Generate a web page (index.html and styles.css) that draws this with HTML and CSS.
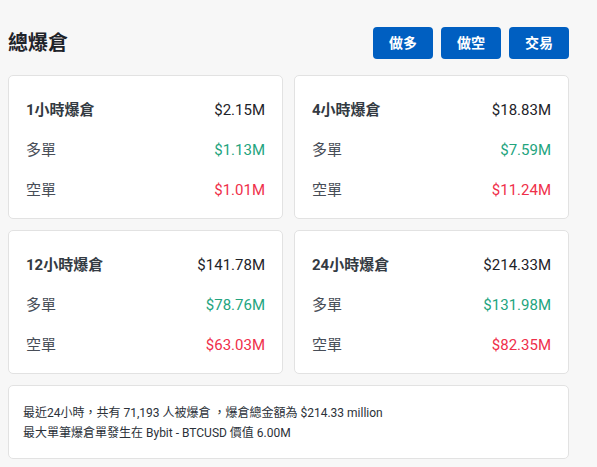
FILE: index.html
```html
<!DOCTYPE html>
<html lang="zh-Hant">
<head>
<meta charset="utf-8">
<link rel="stylesheet" href="styles.css">
</head>
<body>
<div class="page">
  <div class="header">
    <h1 class="title">總爆倉</h1>
    <div class="actions">
      <button class="btn">做多</button>
      <button class="btn">做空</button>
      <button class="btn">交易</button>
    </div>
  </div>
  <div class="grid">
    <div class="card">
      <div class="row head"><span>1小時爆倉</span><span class="val">$2.15M</span></div>
      <div class="row"><span>多單</span><span class="val up">$1.13M</span></div>
      <div class="row"><span>空單</span><span class="val down">$1.01M</span></div>
    </div>
    <div class="card">
      <div class="row head"><span>4小時爆倉</span><span class="val">$18.83M</span></div>
      <div class="row"><span>多單</span><span class="val up">$7.59M</span></div>
      <div class="row"><span>空單</span><span class="val down">$11.24M</span></div>
    </div>
    <div class="card">
      <div class="row head"><span>12小時爆倉</span><span class="val">$141.78M</span></div>
      <div class="row"><span>多單</span><span class="val up">$78.76M</span></div>
      <div class="row"><span>空單</span><span class="val down">$63.03M</span></div>
    </div>
    <div class="card">
      <div class="row head"><span>24小時爆倉</span><span class="val">$214.33M</span></div>
      <div class="row"><span>多單</span><span class="val up">$131.98M</span></div>
      <div class="row"><span>空單</span><span class="val down">$82.35M</span></div>
    </div>
  </div>
  <div class="summary">
    <p>最近24小時，共有 71,193 人被爆倉 ，爆倉總金額為 $214.33 million</p>
    <p>最大單筆爆倉單發生在 Bybit - BTCUSD 價值 6.00M</p>
  </div>
</div>
</body>
</html>
```
FILE: styles.css
```css
* { box-sizing: border-box; }
html, body {
  margin: 0;
  padding: 0;
  background: #f7f7f7;
}
body {
  font-family: Roboto, "Noto Sans CJK TC", sans-serif;
  color: #1e2329;
}
.page {
  width: 561px;
  margin-left: 8px;
  padding-top: 27px;
}
.header {
  display: flex;
  justify-content: space-between;
  align-items: center;
  height: 32px;
}
.title {
  margin: 0;
  font-size: 20px;
  font-weight: 700;
  color: #1e2329;
  line-height: 32px;
}
.actions {
  display: flex;
  gap: 8px;
}
.btn {
  width: 60px;
  height: 32px;
  border: none;
  border-radius: 4px;
  background: #005fc1;
  color: #fff;
  font-family: Roboto, "Noto Sans CJK TC", sans-serif;
  font-size: 14px;
  font-weight: 700;
  line-height: 20px;
  padding: 0;
}
.grid {
  margin-top: 16px;
  display: grid;
  grid-template-columns: 275px 275px;
  column-gap: 11px;
  row-gap: 11px;
}
.card {
  background: #fff;
  border: 1px solid #e2e2e2;
  border-radius: 5px;
  height: 144px;
  padding: 14px 17px 8px 17px;
}
.row {
  display: flex;
  justify-content: space-between;
  align-items: center;
  height: 40px;
  font-size: 15px;
  line-height: 20px;
  color: #474d57;
}
.row span { display: block; line-height: 20px; }
.row.head span:first-child {
  font-weight: 700;
  color: #333a42;
}
.val { color: #1e2329; }
.val.up { color: #23a47e; }
.val.down { color: #ef2f4a; }
.summary {
  margin-top: 11px;
  background: #fff;
  border: 1px solid #e2e2e2;
  border-radius: 5px;
  height: 74px;
  padding: 17px 14px 15px 14px;
  font-size: 12px;
  line-height: 20px;
  color: #2b3139;
}
.summary p { margin: 0; }
```
